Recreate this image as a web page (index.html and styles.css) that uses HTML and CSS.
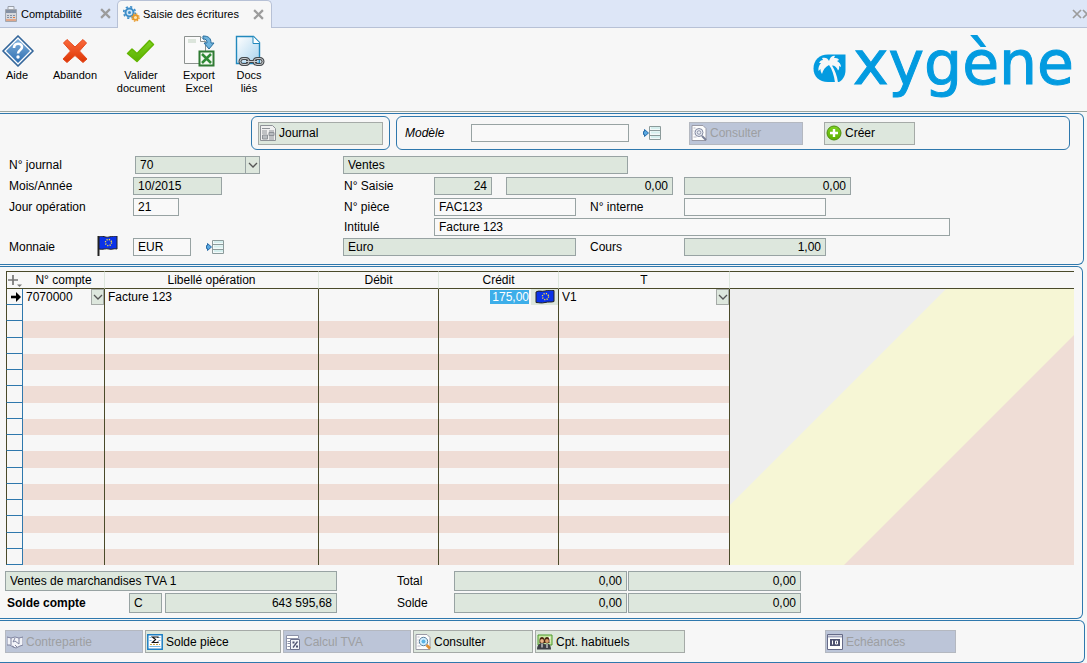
FILE: index.html
```html
<!DOCTYPE html>
<html lang="fr">
<head>
<meta charset="utf-8">
<title>Saisie des écritures</title>
<link rel="stylesheet" href="styles.css">
</head>
<body>
<svg class="defs" aria-hidden="true">
  <defs>
    <linearGradient id="blue" x1="0" y1="0" x2="0" y2="1"><stop offset="0" stop-color="#7fb0dc"/><stop offset="1" stop-color="#2d6db0"/></linearGradient>
    <linearGradient id="red" x1="0" y1="0" x2="0" y2="1"><stop offset="0" stop-color="#fb6a3c"/><stop offset="1" stop-color="#dc3504"/></linearGradient>
    <linearGradient id="green" x1="0" y1="0" x2="0" y2="1"><stop offset="0" stop-color="#7ed321"/><stop offset="1" stop-color="#5cb000"/></linearGradient>
    <linearGradient id="sheet" x1="0" y1="0" x2="1" y2="1"><stop offset="0" stop-color="#ffffff"/><stop offset="1" stop-color="#a9d3ee"/></linearGradient>
    <symbol id="chevron" viewBox="0 0 10 6"><path d="M1 1l4 4 4-4" fill="none" stroke="#555" stroke-width="1.3"/></symbol>
    <symbol id="close" viewBox="0 0 10 10"><path d="M1 1l8 8M9 1l-8 8" fill="none" stroke="#9c9c9c" stroke-width="2"/></symbol>
    <symbol id="picker" viewBox="0 0 20 16">
      <path d="M8 1h11v13H8z" fill="#f3f9f9"/>
      <path d="M9 3h9M9 7.500h9M9 12h9" stroke="#d5efee" stroke-width="2"/>
      <path d="M7.500 1.500h11v13h-11zM8 5.500h10M8 10.500h10" fill="none" stroke="#8c9b9b"/>
      <path d="M1.500 6.500h1V4.500L6.500 8l-4 3.500v-2h-1z" fill="#5aa9e2" stroke="#286ca8"/>
    </symbol>
    <symbol id="stars" viewBox="0 0 10 10"><circle cx="5" cy="5" r="3.400" fill="none" stroke="#ffe23a" stroke-width="1.500" stroke-dasharray="1.300 1.370"/></symbol>
    <symbol id="magnifier" viewBox="0 0 16 16">
      <path d="M1 .5h11l3 3v12H1z" fill="#fdfdfd" stroke="#9a9aa6"/>
      <path d="M2.500 3h2M2.500 6h1M2.500 9h1M2.500 12h3" stroke="#b9b9c6"/>
    </symbol>
  </defs>
</svg>

<nav class="tabs">
  <button class="tab" type="button">
    <svg width="14" height="16" viewBox="0 0 14 16"><path d="M4 .5h6V5H4z" fill="#eef2f8" stroke="#9aa0aa"/><path d="M1.500 3.500h11v12h-11z" fill="#d5d7dc" stroke="#a3a7ae"/><path d="M2 4h10v3H2z" fill="#8490a3"/><path d="M3 9.500h8M3 11.500h8" stroke="#8490a3" stroke-dasharray="2 1"/><path d="M2 14h10" stroke="#e8773a"/><path d="M9 11.500h2" stroke="#e8773a"/></svg>
    <span>Comptabilité</span>
    <svg class="tab-close" width="11" height="11"><use href="#close"/></svg>
  </button>
  <button class="tab active" type="button">
    <svg width="17" height="16" viewBox="0 0 17 16"><circle cx="6.500" cy="6.500" r="4" fill="#cfe6f7" stroke="#3d8dc8" stroke-width="2"/><circle cx="6.500" cy="6.500" r="5.800" fill="none" stroke="#3d8dc8" stroke-width="1.600" stroke-dasharray="2.200 2.350"/><circle cx="6.500" cy="6.500" r="1.500" fill="#3d8dc8"/><circle cx="12.500" cy="11.500" r="2.400" fill="#ffe6b0" stroke="#e89a2a" stroke-width="1.700"/><circle cx="12.500" cy="11.500" r="3.700" fill="none" stroke="#e89a2a" stroke-width="1.200" stroke-dasharray="1.500 1.400"/></svg>
    <span>Saisie des écritures</span>
    <svg class="tab-close" width="11" height="11"><use href="#close"/></svg>
  </button>
  <button class="close-all" type="button" aria-label="Tout fermer"><svg width="15" height="10" viewBox="0 0 15 10"><path d="M1 1l8 8M9 1L1 9M11 1l8 8M11 9l8-8" fill="none" stroke="#9c9c9c" stroke-width="1.700"/></svg></button>
</nav>

<header class="toolbar">
  <button class="tool" type="button">
    <svg width="34" height="32" viewBox="0 0 34 32"><path d="M18 1L33 16 18 31 3 16z" fill="#fff" stroke="#35679b" stroke-width="1.700" stroke-linejoin="round"/><path d="M18 4l12 12-12 12L6 16z" fill="url(#blue)"/><path d="M14 13c0-5.500 8-5.500 8-1 0 3.500-4 3-4 6.500" fill="none" stroke="#fff" stroke-width="2.600"/><circle cx="18" cy="22" r="1.700" fill="#fff"/></svg>
    <span>Aide</span>
  </button>
  <button class="tool wide" type="button">
    <svg width="34" height="32" viewBox="0 0 34 32"><path d="M9 4.500l8 7.500 8-7.500L28.500 8 21.500 16l7.500 8L25 27.500l-8-7-8 7L5 24l7.500-8L5.500 8z" fill="url(#red)" stroke="#e5491d" stroke-linejoin="round"/></svg>
    <span>Abandon</span>
  </button>
  <button class="tool wide" type="button">
    <svg width="34" height="32" viewBox="0 0 34 32"><path d="M3.500 18.500L8 14l5 4.500L25.500 5.500l4 4L13 26.500z" fill="url(#green)" stroke="#62b500" stroke-width="1.500" stroke-linejoin="round"/></svg>
    <span>Valider<br>document</span>
  </button>
  <button class="tool" type="button">
    <svg width="34" height="32" viewBox="0 0 34 32"><path d="M2.500 1.500h16l5 5v22h-21z" fill="#fafafa" stroke="#8d9290"/><path d="M18.500 1.500v5h5" fill="#fff" stroke="#8d9290"/><path d="M6 4h8v4H6z" fill="#dce5dc"/><path d="M21 1c6 0 8 2.500 8 7h3l-5 6-5-6h3c0-3-1-4-4-4z" fill="#6fb4de" stroke="#2a6f9e"/><path d="M17.500 16.500h14v14h-14z" fill="#f5faf3" stroke="#2f7a33" stroke-width="2"/><path d="M20 19l9 9M29 19l-9 9" stroke="#2f8a35" stroke-width="2.500"/></svg>
    <span>Export<br>Excel</span>
  </button>
  <button class="tool" type="button">
    <svg width="34" height="32" viewBox="0 0 34 32"><path d="M4.500 1.500h17l6 6v21h-23z" fill="url(#sheet)" stroke="#2289bd" stroke-width="1.400"/><path d="M21 1.500v7h7" fill="#fff" stroke="#2289bd"/><g fill="none" stroke="#44484c" stroke-width="3"><rect x="8" y="23.500" width="9" height="6" rx="3"/><rect x="22" y="23.500" width="9" height="6" rx="3"/><path d="M14 26.500h11"/></g><g fill="none" stroke="#c8cccf"><rect x="8" y="23.500" width="9" height="6" rx="3"/><rect x="22" y="23.500" width="9" height="6" rx="3"/><path d="M14 26.500h11"/></g></svg>
    <span>Docs<br>liés</span>
  </button>
  <div class="brand">
    <svg width="34" height="30" viewBox="0 0 34 30"><path d="M15 .5h17.500V16c0 6-3 10-6.500 12H15C6 28 .5 22.500 .5 14.500S6 .5 15 .5z" fill="#039be0"/><path d="M16 7c-1-3-4-4-7-3l1 2c-2 0-3 1-4 3h2c-2 2-3 5-2.500 8l2-2c0 2 .5 3.500 1.500 5 1-4 3-7 7-9 3 4 5 10 6 17.500h3c-1-7-3-12-6-17 3 0 5 2 6 5 1-1 1.500-2.500 1-4.500l2 1c0-3-2-5-4-6l2-1c-1-2-3-2-5-2l1-2c-3-1-5 2-6 5z" fill="#f7f7f7"/></svg>
    <span>xygène</span>
  </div>
</header>

<main>
  <form class="panel entry">
    <div class="model-row">
      <div class="group journal-group">
        <button class="btn" type="button"><svg width="16" height="16" viewBox="0 0 16 16"><path d="M.5.5h12l3 3v12H.5z" fill="#f0f0f0" stroke="#8e9297"/><path d="M2 3.500h8M2 6h5M9 6h5M2 8h5M9 12h5M9 14h5" stroke="#8e9297"/><path d="M2.500 10h5v4h-5zM9 7.500h5v3H9z" fill="#b8bcc0" stroke="#8e9297"/></svg>Journal</button>
      </div>
      <div class="group model-group">
        <label for="modele">Modèle</label>
        <input id="modele" class="field w158" type="text">
        <button class="icon-btn" type="button" aria-label="Liste des modèles"><svg width="20" height="16"><use href="#picker"/></svg></button>
        <button class="btn w114" type="button" disabled><svg width="16" height="16" viewBox="0 0 16 16"><use href="#magnifier"/><circle cx="8" cy="7.500" r="4" fill="#e8ebf3" stroke="#8389a0"/><circle cx="8" cy="7.500" r="1.800" fill="none" stroke="#9298ac"/><path d="M11 11l4 4" stroke="#7a8098" stroke-width="2"/></svg>Consulter</button>
        <button class="btn create w91" type="button"><svg width="16" height="16" viewBox="0 0 16 16"><circle cx="8" cy="8" r="7" fill="url(#green)" stroke="#4f8f10"/><path d="M8 4v8M4 8h8" stroke="#fff" stroke-width="2.400"/></svg>Créer</button>
      </div>
    </div>
    <div class="form">
      <div class="rows">
        <div class="row"><label class="lab" for="njournal">N° journal</label>
          <span class="combo journal"><select id="njournal" class="field ro"><option>70</option></select><span class="arrow"><svg width="10" height="6"><use href="#chevron"/></svg></span></span></div>
        <div class="row"><label class="lab" for="mois">Mois/Année</label><input id="mois" class="field ro w89" value="10/2015" readonly></div>
        <div class="row"><label class="lab" for="jour">Jour opération</label><input id="jour" class="field w46" value="21"></div>
        <div class="row"></div>
        <div class="row"><label class="lab currency" for="monnaie">Monnaie
          <svg width="22" height="22" viewBox="0 0 22 22"><path d="M1.500 0v20" stroke="#222" stroke-width="2"/><path d="M2 1c4-2 6 1 10 0s6-1 8-1v13c-3-1-5 1-8 0s-6 1-10 0z" fill="#0a32e8" stroke="#222"/><use href="#stars" x="7" y="2" width="9" height="9"/></svg></label>
          <input id="monnaie" class="field w58" value="EUR">
          <button class="icon-btn far" type="button" aria-label="Liste des monnaies"><svg width="20" height="16"><use href="#picker"/></svg></button></div>
      </div>
      <div class="rows">
        <div class="row"><input class="field ro w285" value="Ventes" aria-label="Libellé du journal" readonly></div>
        <div class="row"><label class="lab2" for="saisie">N° Saisie</label><input id="saisie" class="field ro num w58" value="24" readonly><input class="field ro num w167 gap14" value="0,00" aria-label="Débit saisi" readonly><input class="field ro num w167 gap11" value="0,00" aria-label="Crédit saisi" readonly></div>
        <div class="row"><label class="lab2" for="piece">N° pièce</label><input id="piece" class="field w142" value="FAC123"><label class="lab3" for="interne">N° interne</label><input id="interne" class="field w142"></div>
        <div class="row"><label class="lab2" for="intitule">Intitulé</label><input id="intitule" class="field w516" value="Facture 123"></div>
        <div class="row"><input class="field ro w233" value="Euro" aria-label="Nom de la monnaie" readonly><label class="lab3" for="cours">Cours</label><input id="cours" class="field ro num w142" value="1,00" readonly></div>
      </div>
    </div>
  </form>

  <section class="panel lines">
    <div class="grid-area">
      <table class="ledger">
        <colgroup><col class="c-mark"><col class="c-acct"><col class="c-label"><col class="c-amt"><col class="c-amt"><col class="c-tax"></colgroup>
        <thead><tr>
          <th><svg width="15" height="15" viewBox="0 0 15 15"><path d="M6 2v10M1 7h10" stroke="#777" stroke-width="1.700"/><path d="M10 11.500h5L12.500 14z" fill="#777"/></svg></th>
          <th>N° compte</th><th>Libellé opération</th><th>Débit</th><th>Crédit</th><th>T</th></tr></thead>
        <tbody>
          <tr>
            <td><svg width="12" height="12" viewBox="0 0 12 12"><path d="M1 6h6" stroke="#000" stroke-width="2.600"/><path d="M6 1l5 5-5 5z"/></svg></td>
            <td><span class="combo"><select class="cell" aria-label="N° compte"><option>7070000</option></select><span class="arrow boxed"><svg width="10" height="6"><use href="#chevron"/></svg></span></span></td>
            <td><input class="cell" value="Facture 123" aria-label="Libellé opération"></td>
            <td></td>
            <td><div class="credit"><input class="selected" value="175,00" aria-label="Crédit"><button class="flag-btn" type="button" aria-label="Devise"><svg width="20" height="14" viewBox="0 0 20 14"><path d="M1 2c3-2 5 0 9-1s6-1 9-.5v11c-3 1-5 0-9 1s-6 0-9 0z" fill="#0a32e8" stroke="#222"/><use href="#stars" x="6" y="2" width="9" height="9"/></svg></button></div></td>
            <td><span class="combo"><select class="cell" aria-label="Code TVA"><option>V1</option></select><span class="arrow boxed"><svg width="10" height="6"><use href="#chevron"/></svg></span></span></td>
          </tr>
          <tr><td></td><td></td><td></td><td></td><td></td><td></td></tr>
          <tr><td></td><td></td><td></td><td></td><td></td><td></td></tr>
          <tr><td></td><td></td><td></td><td></td><td></td><td></td></tr>
          <tr><td></td><td></td><td></td><td></td><td></td><td></td></tr>
          <tr><td></td><td></td><td></td><td></td><td></td><td></td></tr>
          <tr><td></td><td></td><td></td><td></td><td></td><td></td></tr>
          <tr><td></td><td></td><td></td><td></td><td></td><td></td></tr>
          <tr><td></td><td></td><td></td><td></td><td></td><td></td></tr>
          <tr><td></td><td></td><td></td><td></td><td></td><td></td></tr>
          <tr><td></td><td></td><td></td><td></td><td></td><td></td></tr>
          <tr><td></td><td></td><td></td><td></td><td></td><td></td></tr>
          <tr><td></td><td></td><td></td><td></td><td></td><td></td></tr>
          <tr><td></td><td></td><td></td><td></td><td></td><td></td></tr>
          <tr><td></td><td></td><td></td><td></td><td></td><td></td></tr>
          <tr><td></td><td></td><td></td><td></td><td></td><td></td></tr>
          <tr><td></td><td></td><td></td><td></td><td></td><td></td></tr>
        </tbody>
      </table>
      <div class="filler">
        <div class="filler-head"></div>
        <svg class="filler-art" viewBox="0 0 344 276" preserveAspectRatio="none"><path d="M0 0h344v276H0z" fill="#f6f6d5"/><path d="M0 0h216L0 216z" fill="#eeeeee"/><path d="M344 46v230H114z" fill="#efddd6"/></svg>
      </div>
    </div>
    <div class="totals">
      <input class="field ro w332" value="Ventes de marchandises TVA 1" aria-label="Intitulé du compte" readonly>
      <label class="tot-lab" for="td">Total</label>
      <input id="td" class="field ro num w173" value="0,00" readonly><input class="field ro num w173" value="0,00" aria-label="Total crédit" readonly>
    </div>
    <div class="totals">
      <label class="strong" for="sens">Solde compte</label>
      <input id="sens" class="field ro w33" value="C" readonly><input class="field ro num balance" value="643 595,68" aria-label="Montant du solde" readonly>
      <label class="tot-lab" for="sd">Solde</label>
      <input id="sd" class="field ro num w173" value="0,00" readonly><input class="field ro num w173" value="0,00" aria-label="Solde crédit" readonly>
    </div>
  </section>

  <footer class="panel actions">
    <button class="btn w138" type="button" disabled><svg width="16" height="16" viewBox="0 0 16 16"><path d="M0 3l4 1 4-1 4 1 4-1v8l-3 1-4 2-3-1-3-2H0z" fill="#f2f3f8" stroke="#8085a0"/><path d="M4 4v7M12 4v6l-4-3-2 1 2-4M5 12l2 1M8 11l2 2" fill="none" stroke="#8085a0"/></svg>Contrepartie</button>
    <button class="btn w136" type="button"><svg width="16" height="16" viewBox="0 0 16 16"><path d="M.8.8h14.400v14.400H.8z" fill="#fff" stroke="#1c7fc4" stroke-width="1.500"/><path d="M2.500 3.500h2M11.500 3.500h2M2.500 6.500h2M11.500 6.500h2M2.500 12.500h11" stroke="#7abbe4"/><path d="M11 4V3H5.500l3 2.500-3 3H11v-1" fill="none" stroke="#111" stroke-width="1.200"/><path d="M3 10.500h10" stroke="#caa84a" stroke-dasharray="2 1"/></svg>Solde pièce</button>
    <button class="btn w128" type="button" disabled><svg width="16" height="16" viewBox="0 0 16 16"><path d="M1.500 1.500h12v3h-12zM1.500 4.500h9v11h-9z" fill="#fff" stroke="#8d92a8"/><path d="M5.500 5.500h9v10h-9z" fill="#f2f3f8" stroke="#6c718c"/><path d="M2.500 7.500h3M2.500 9.500h3M2.500 12.500h3" stroke="#8d92a8"/><path d="M8 13.500l4.500-6" stroke="#4d5270" stroke-width="1.300"/><path d="M7.500 7.500h2v2h-2zM11 11.500h2v2h-2z" fill="#4d5270"/></svg>Calcul TVA</button>
    <button class="btn w120" type="button"><svg width="16" height="16" viewBox="0 0 16 16"><use href="#magnifier"/><circle cx="8.500" cy="7.500" r="4.200" fill="#d3efff" stroke="#5b7f9a"/><circle cx="8.500" cy="7.500" r="2" fill="#59b4e6"/><path d="M11.500 11l3.500 3.500" stroke="#e08e32" stroke-width="2.600"/></svg>Consulter</button>
    <button class="btn w150" type="button"><svg width="16" height="16" viewBox="0 0 16 16"><path d="M1 1h14v10H1z" fill="#c9e8a4" stroke="#4c9a2c"/><path d="M12.500 3v5M11.500 4h2M11.500 7h2" stroke="#fff"/><path d="M2.500 6c0-4 5-4 5 0v3h-5zM7.500 6c0-4 5-4 5 0v3h-5z" fill="#4a2410"/><circle cx="5" cy="7" r="1.900" fill="#eab88a"/><circle cx="10" cy="7" r="1.900" fill="#d99e6c"/><path d="M0 15.500c0-5 3-6.500 5-6.500s3 1 3 2c2-3 6-1 6 4.500z" fill="#3c3f46"/><path d="M5 9.500v4M10 10v4" stroke="#fff"/></svg>Cpt. habituels</button>
    <button class="btn w131 last" type="button" disabled><svg width="16" height="16" viewBox="0 0 16 16"><path d="M.5.5h15v15H.5z" fill="#fff" stroke="#666b88"/><path d="M1 2.500h14" stroke="#a6aac0" stroke-width="2"/><path d="M3 5h10v7H3z" fill="#4d5270"/><path d="M5.500 6.500v4M8.500 7h2v3h-2z" fill="none" stroke="#fff"/></svg>Echéances</button>
  </footer>
</main>
</body>
</html>
```

FILE: styles.css
```css
* { box-sizing: border-box; }

body {
  margin: 0;
  background: #f7f7f7;
  color: #000;
  font: 12px/16px "Liberation Sans", Arial, sans-serif;
}

button, input, select {
  margin: 0;
  padding: 0;
  border: 0;
  border-radius: 0;
  background: none;
  color: inherit;
  font: inherit;
}

svg { display: block; flex: none; }
.defs { position: absolute; width: 0; height: 0; }

/* Document tabs */
.tabs {
  display: flex;
  height: 28px;
  background: #dde6f7;
  border-bottom: 1px solid #b7c1d6;
  font-size: 11px;
}
.tab {
  display: flex;
  align-items: center;
  width: 117px;
  height: 27px;
  padding: 0 6px 0 4px;
  gap: 3px;
  white-space: nowrap;
}
.tab-close { margin-left: auto; }
.tab.active {
  width: 155px;
  height: 28px;
  padding: 0 7px 1px 5px;
  background: #f7f7f7;
  border: 1px solid #b7c1d6;
  border-bottom: 0;
  border-radius: 5px 5px 0 0;
}
.close-all { margin-left: auto; }

/* Toolbar */
.toolbar {
  display: flex;
  align-items: flex-start;
  gap: 16px;
  height: 84px;
  border-bottom: 1px solid #9ca69f;
}
.tool {
  display: flex;
  flex-direction: column;
  align-items: center;
  gap: 2px;
  width: 34px;
  padding-top: 7px;
  font-size: 11px;
  line-height: 13px;
}
.tool.wide { width: 50px; }
.brand {
  display: flex;
  align-items: center;
  gap: 6px;
  margin: 5px 13px 0 auto;
  color: #039be0;
  font: 60px/60px "DejaVu Sans", sans-serif;
  -webkit-text-stroke: 1px #039be0;
}
.brand svg { margin-top: 12px; }

/* Framed panels */
.panel {
  border: 1px solid #2f78ad;
  border-left: 0;
  border-radius: 0 6px 6px 0;
  margin-bottom: 1px;
}
.entry { margin: 1px 3px 1px 0; padding: 2px 13px 8px 0; }
.lines { margin-right: 4px; padding: 4px 8px 5px 0; }
.actions { display: flex; margin: 0 2px 0 0; padding: 9px 0 9px 5px; gap: 2px; }

.model-row { display: flex; gap: 6px; margin-left: 251px; }
.group {
  display: flex;
  align-items: center;
  height: 34px;
  border: 1px solid #2f78ad;
  border-radius: 6px;
}
.journal-group { width: 139px; padding: 0 6px; }
.journal-group .btn { flex: 1; }
.model-group { flex: 1; padding-left: 8px; }
.model-group label { width: 66px; font-style: italic; }
.model-group .icon-btn { margin: 0 27px 0 13px; }
.create { margin-left: 21px; }

.btn {
  display: flex;
  align-items: center;
  gap: 3px;
  height: 23px;
  padding: 0 1px;
  background: #dde7dd;
  border: 1px solid #a5aaa7;
  white-space: nowrap;
}
.btn:disabled { background: #bcc5d8; border-color: #b4b8c0; color: #9d9fa2; }

.field {
  height: 18px;
  padding: 0 4px;
  border: 1px solid #98a3a3;
  background: #f9f9f9;
}
.ro { background: #dde7dd; }
.num { text-align: right; }

/* Entry form */
.form { display: flex; margin-top: 6px; }
.rows {
  display: grid;
  grid-template-rows: 21px 21px 20px 20px 18px;
}
.rows:first-child { width: 343px; padding-left: 9px; }
.row { display: flex; align-items: center; height: 18px; }
.lab { width: 124px; }
.lab2 { width: 91px; padding-left: 1px; }
.lab3 { width: 108px; padding-left: 14px; }
.currency { display: flex; align-items: center; justify-content: space-between; padding-right: 14px; }
.icon-btn.far { margin-left: 14px; }
.gap14 { margin-left: 14px; }
.gap11 { margin-left: 11px; }

.combo { position: relative; display: flex; height: 16px; }
.combo select { flex: 1; appearance: none; }
.combo.journal { width: 125px; height: 18px; margin-left: 2px; }
.arrow {
  position: absolute;
  top: 0;
  right: 0;
  bottom: 0;
  display: flex;
  align-items: center;
  justify-content: center;
  width: 15px;
  border-left: 1px solid #98a3a3;
  pointer-events: none;
}
.arrow.boxed { width: 13px; background: #dde7dd; border: 1px solid #a5aaa7; }

/* Ledger */
.grid-area { display: flex; padding-left: 6px; }
.ledger {
  width: 724px;
  height: 294px;
  table-layout: fixed;
  border-collapse: separate;
  border-spacing: 0;
}
.c-mark { width: 17px; }
.c-acct { width: 82px; }
.c-label { width: 214px; }
.c-amt { width: 120px; }
.c-tax { width: 171px; }
.ledger thead tr { height: 18px; }
.ledger tbody tr { height: 16px; }
.ledger th {
  height: 18px;
  padding: 0;
  border: solid #4a4a2a;
  border-width: 1px 0;
  border-right: 1px solid #dde7dd;
  font-weight: normal;
  line-height: 16px;
}
.ledger th:first-child { border-left: 1px solid #4a4a2a; border-right: 0; }
.ledger td { height: 16px; padding: 0; border-right: 1px solid #4a4a2a; }
.ledger td:first-child {
  background: #f7f7f7;
  border: solid #2f78ad;
  border-width: 0 1px 1px 0;
  border-left: 1px solid #4a4a2a;
}
.ledger td:first-child svg { margin-left: 3px; }
.ledger tbody tr:nth-child(odd):not(:first-child) { background: #efddd6; }
.cell { display: block; width: 100%; height: 16px; padding: 0 3px; }
.credit { display: flex; justify-content: flex-end; gap: 2px; height: 16px; }
.selected { width: 39px; height: 14px; margin-top: 1px; background: #3daee9; color: #fff; text-align: right; }
.flag-btn { width: 27px; padding-left: 4px; background: #dde7dd; }

.filler { display: flex; flex: 1; flex-direction: column; }
.filler-head { height: 18px; border: solid #4a4a2a; border-width: 1px 0; }
.filler-art { flex: 1; width: 100%; height: 276px; }

/* Totals under the ledger */
.totals { display: flex; align-items: center; padding: 0 0 2px 5px; }
.totals:nth-child(2) { padding-top: 6px; }
.totals:last-child { padding-bottom: 0; }
.totals .field { height: 20px; margin-right: 1px; }
.totals .w332 { margin-right: 0; }
.totals .w33 { margin-right: 3px; }
.totals .balance { width: 172px; margin-right: 0; }
.tot-lab { width: 117px; padding-left: 60px; }
.strong { width: 124px; padding-left: 2px; font-weight: bold; }
.last { margin-left: 138px; }

.w33 { width: 33px; }
.w46 { width: 46px; }
.w58 { width: 58px; }
.w89 { width: 89px; }
.w91 { width: 91px; }
.w114 { width: 114px; }
.w120 { width: 120px; }
.w128 { width: 128px; }
.w131 { width: 131px; }
.w136 { width: 136px; }
.w138 { width: 138px; }
.w142 { width: 142px; }
.w150 { width: 150px; }
.w158 { width: 158px; }
.w167 { width: 167px; }
.w173 { width: 173px; }
.w233 { width: 233px; }
.w285 { width: 285px; }
.w332 { width: 332px; }
.w516 { width: 516px; }
```
